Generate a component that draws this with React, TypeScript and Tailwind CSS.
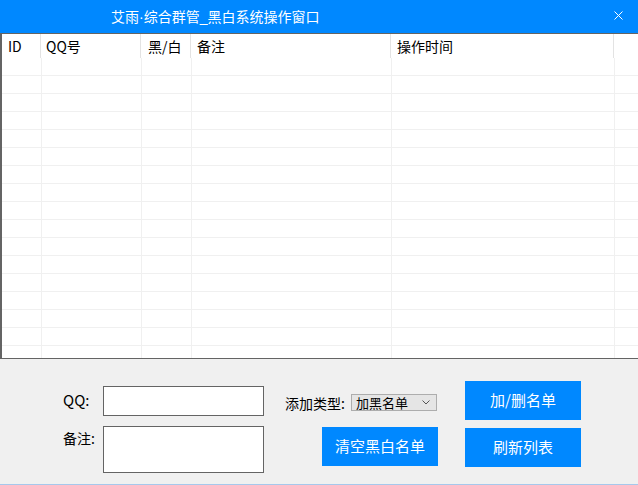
import React from "react";

const headerCols = [
  { label: "ID", w: "w-[39px]", pl: "pl-[6px]" },
  { label: "QQ号", w: "w-[100px]", pl: "pl-[5px]" },
  { label: "黑/白", w: "w-[50px]", pl: "pl-[7px]" },
  { label: "备注", w: "w-[200px]", pl: "pl-[6px]" },
  { label: "操作时间", w: "w-[223px]", pl: "pl-[6px]" },
];

const bodyCols = ["w-[40px]", "w-[100px]", "w-[50px]", "w-[200px]", "w-[223px]"];

const rows = Array.from({ length: 17 }, (_, i) => i);

export default function App() {
  return (
    <div
      className="flex h-[485px] w-[638px] flex-col overflow-hidden bg-[#f0f0f0] text-black"
      style={{ fontFamily: '"Noto Sans CJK SC", "Liberation Sans", sans-serif' }}
    >
      {/* title bar */}
      <div className="flex h-[33px] shrink-0 items-center bg-[#0088ff] text-white">
        <span className="ml-[111px] text-[14px] leading-none">
          艾雨<span className="font-['Liberation_Sans']">·</span>综合群管<span className="font-['Liberation_Sans']">_</span>黑白系统操作窗口
        </span>
        <svg className="ml-auto mr-[15px] mt-[-2px] h-[9px] w-[9px]" viewBox="0 0 9 9">
          <path d="M0.5 0.5 L8.5 8.5 M8.5 0.5 L0.5 8.5" stroke="white" strokeWidth="1" />
        </svg>
      </div>

      {/* list */}
      <div className="h-[326px] shrink-0 overflow-hidden border-y border-l-2 border-[#646464] bg-white">
        <div className="flex h-[24px]">
          {headerCols.map((c) => (
            <div
              key={c.label}
              className={`${c.w} ${c.pl} flex items-center border-r border-[#e3e3e3] text-[14px] leading-none`}
            >
              {c.label}
            </div>
          ))}
          <div className="flex-1" />
        </div>
        {rows.map((r) => (
          <div key={r} className="flex h-[18px] border-b border-[#f0f0f0]">
            {bodyCols.map((w, i) => (
              <div key={i} className={`${w} border-r border-[#f0f0f0]`} />
            ))}
            <div className="flex-1" />
          </div>
        ))}
      </div>

      {/* form panel */}
      <div className="flex flex-1 items-start pt-[22px]">
        <div className="ml-[63px] mt-[5px] grid grid-cols-[40px_161px] gap-y-[10px]">
          <div className="flex items-center pb-[3px] text-[15px] leading-none">QQ:</div>
          <div className="h-[30px] border border-[#646464] bg-white" />
          <div className="pt-[5px] text-[14px] leading-none">备注:</div>
          <div className="h-[47px] border border-[#646464] bg-white" />
        </div>

        <div className="ml-[21px] mt-[13px] flex flex-col">
          <div className="flex h-[17px] items-center">
            <span className="w-[66px] text-[14px] leading-none">添加类型:</span>
            <div className="flex h-[17px] w-[86px] items-center border border-[#adadad] bg-[#e5e5e5] pl-[4px]">
              <span className="text-[13px] leading-none">加黑名单</span>
              <svg className="ml-auto mr-[6px] h-[5px] w-[8px]" viewBox="0 0 8 5">
                <path d="M0.5 0.5 L4 4 L7.5 0.5" stroke="#555" strokeWidth="1" fill="none" />
              </svg>
            </div>
          </div>
          <button className="ml-[37px] mt-[16px] h-[39px] w-[116px] bg-[#0088ff] text-[15px] text-white">
            清空黑白名单
          </button>
        </div>

        <div className="ml-[27px] flex flex-col gap-[8px]">
          <button className="h-[39px] w-[116px] bg-[#0088ff] text-[15px] text-white">加/删名单</button>
          <button className="h-[39px] w-[116px] bg-[#0088ff] text-[15px] text-white">刷新列表</button>
        </div>
      </div>
      <div className="h-px shrink-0 bg-[#a6c8ec]" />
    </div>
  );
}
